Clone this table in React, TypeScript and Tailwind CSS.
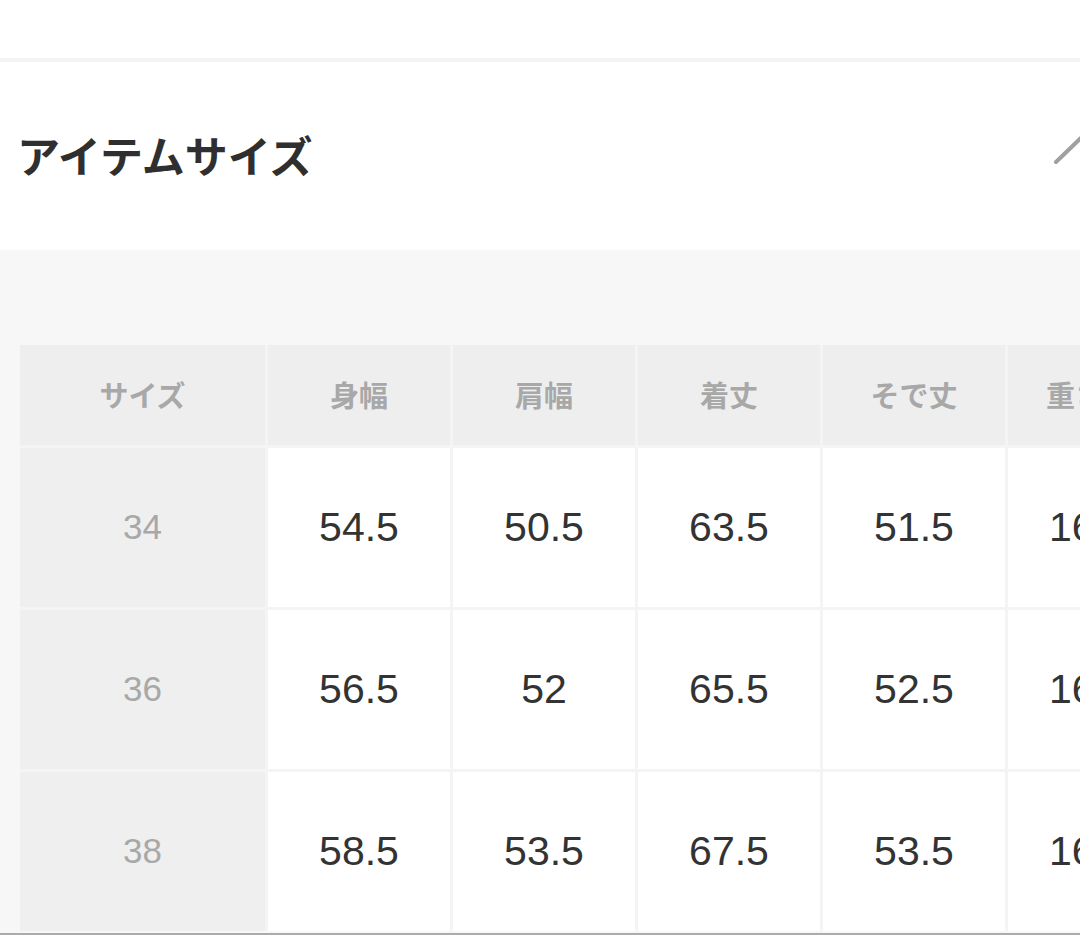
import React from "react";

const headers = ["サイズ", "身幅", "肩幅", "着丈", "そで丈", "重さ"];
const rows = [
  ["34", "54.5", "50.5", "63.5", "51.5", "160"],
  ["36", "56.5", "52", "65.5", "52.5", "163"],
  ["38", "58.5", "53.5", "67.5", "53.5", "166"],
];

const jp = { fontFamily: '"Noto Sans CJK JP", "Noto Sans", sans-serif' };
const num = { fontFamily: '"Liberation Sans", Arial, sans-serif' };

export default function App() {
  return (
    <div className="w-[1080px] h-[935px] overflow-hidden bg-white flex flex-col">
      <div className="h-[58px] bg-white shrink-0" />
      <div className="h-[4px] bg-[#f4f4f4] shrink-0" />
      <div className="h-[188px] shrink-0 flex items-center justify-between pl-[17px] pb-[4px]">
        <h2 className="text-[43px] font-bold text-[#2f2f2f] leading-none" style={jp}>
          アイテムサイズ
        </h2>
        <svg width="40" height="34" viewBox="0 0 40 34" className="-mr-[13px] mb-[12px] shrink-0">
          <polyline points="3,31 30,5 57,31" fill="none" stroke="#a0a0a0" strokeWidth="4" strokeLinecap="round" />
        </svg>
      </div>
      <div className="flex-1 bg-[#f7f7f7] border-b-2 border-[#ababab] pt-[95px] pl-[20px] overflow-hidden">
        <div className="grid grid-cols-[245px_182px_182px_182px_182px_182px] grid-rows-[100px_159px_159px_159px] gap-[3px] bg-[#f4f4f4] w-max">
          {headers.map((h, i) => (
            <div
              key={h}
              className={
                i === 5
                  ? "bg-[#eeeeee] flex items-center justify-start pl-[38px] text-[29px] font-semibold text-[#a8a8a8]"
                  : "bg-[#eeeeee] flex items-center justify-center text-[29px] font-semibold text-[#a8a8a8]"
              }
              style={jp}
            >
              {h}
            </div>
          ))}
          {rows.map((r) =>
            r.map((c, i) =>
              i === 0 ? (
                <div key={r[0] + i} className="bg-[#efefef] flex items-center justify-center text-[35px] text-[#a8a8a8]" style={num}>
                  {c}
                </div>
              ) : i === 5 ? (
                <div key={r[0] + i} className="bg-white flex items-center justify-start pl-[41px] text-[41px] text-[#333333]" style={num}>
                  {c}
                </div>
              ) : (
                <div key={r[0] + i} className="bg-white flex items-center justify-center text-[41px] text-[#333333]" style={num}>
                  {c}
                </div>
              )
            )
          )}
        </div>
      </div>
    </div>
  );
}
